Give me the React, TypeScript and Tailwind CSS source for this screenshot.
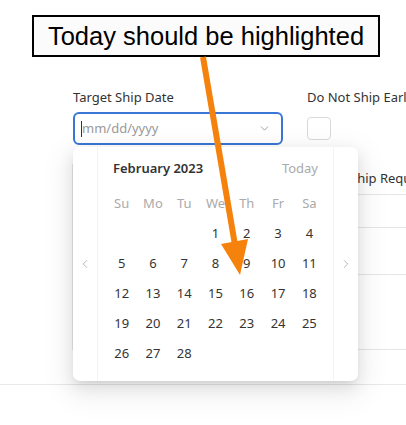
import React from "react";
import { ChevronDown, ChevronLeft, ChevronRight } from "lucide-react";

const weekdays = ["Su", "Mo", "Tu", "We", "Th", "Fr", "Sa"];
const weeks: (number | null)[][] = [
  [null, null, null, 1, 2, 3, 4],
  [5, 6, 7, 8, 9, 10, 11],
  [12, 13, 14, 15, 16, 17, 18],
  [19, 20, 21, 22, 23, 24, 25],
  [26, 27, 28, null, null, null, null],
];

export default function App() {
  return (
    <div
      className="relative w-[406px] h-[425px] bg-white overflow-hidden text-[#333]"
      style={{ fontFamily: '"Noto Sans", "Open Sans", sans-serif' }}
    >
      {/* Form */}
      <div className="flex pl-[73px] pt-[87px] gap-[24px]">
        <div className="flex flex-col w-[210px] shrink-0">
          <div className="h-[20px] text-[13px] leading-[20px] text-[#333]">Target Ship Date</div>
          <div className="mt-[5px] h-[33px] rounded-[6px] border-2 border-[#3a76d6] flex items-center justify-between pl-[6px] pr-[10px]">
            <div className="flex items-center">
              <span className="w-px h-[16px] bg-[#333]" />
              <span className="text-[13px] text-[#9a9a9a]">mm/dd/yyyy</span>
            </div>
            <ChevronDown size={13} strokeWidth={1.5} className="text-[#8c8c8c]" />
          </div>
        </div>
        <div className="flex flex-col shrink-0">
          <div className="h-[20px] text-[13px] leading-[20px] text-[#333] whitespace-nowrap">Do Not Ship Early</div>
          <div className="mt-[10px] w-[24px] h-[23px] rounded-[4px] border border-[#d9d9d9] bg-white" />
        </div>
      </div>

      {/* Background table */}
      <div className="ml-[72px] mt-[19px] border-l border-[#e8e8e8]">
        <div className="h-[31px] flex items-center border-b border-[#e5e5e5]">
          <span className="ml-[277px] text-[13px] whitespace-nowrap text-[#333]">Ship Requ</span>
        </div>
        <div className="h-[33px] border-b border-[#e5e5e5]" />
        <div className="h-[47px] border-b border-[#e5e5e5]" />
        <div className="h-[75px] border-b border-[#e5e5e5]" />
      </div>
      <div className="mt-[34px] border-t border-[#e8e8e8]" />

      {/* Date picker popup */}
      <div className="absolute left-[73px] top-[147px] w-[285px] h-[234px] bg-white rounded-[7px] shadow-[0_6px_16px_rgba(0,0,0,0.10),0_3px_6px_-4px_rgba(0,0,0,0.14),0_9px_28px_8px_rgba(0,0,0,0.06)] flex">
        <div className="w-[25px] border-r border-[#f3f3f3] flex items-center justify-center">
          <ChevronLeft size={14} strokeWidth={1.2} className="text-[#999]" />
        </div>
        <div className="flex-1 px-[8px] pt-[7px]">
          <div className="h-[30px] flex items-center justify-between px-[7px]">
            <span className="text-[13px] font-semibold text-[#333]">February 2023</span>
            <span className="text-[13px] text-[#aaa]">Today</span>
          </div>
          <div className="mt-[5px] grid grid-cols-7 h-[30px]">
            {weekdays.map((d) => (
              <div key={d} className="flex items-center justify-center text-[13px] text-[#aaa]">
                {d}
              </div>
            ))}
          </div>
          {weeks.map((w, i) => (
            <div key={i} className="grid grid-cols-7 h-[30px]">
              {w.map((d, j) => (
                <div key={j} className="flex items-center justify-center text-[13px] text-[#333]">
                  {d ?? ""}
                </div>
              ))}
            </div>
          ))}
        </div>
        <div className="w-[25px] border-l border-[#f3f3f3] flex items-center justify-center">
          <ChevronRight size={14} strokeWidth={1.2} className="text-[#999]" />
        </div>
      </div>

      {/* Callout annotation */}
      <div
        className="absolute left-[32px] top-[15px] w-[348px] h-[42px] border-2 border-black bg-[#fbfbfb] flex items-center justify-center text-[25.5px] text-black"
        style={{ fontFamily: '"Liberation Sans", Arial, sans-serif' }}
      >
        Today should be highlighted
      </div>

      {/* Arrow */}
      <svg className="absolute left-0 top-0 pointer-events-none" width="406" height="425" viewBox="0 0 406 425">
        <line x1="203" y1="57" x2="235" y2="245" stroke="#f5820d" strokeWidth="6" />
        <polygon points="221,244 248,239 240,275" fill="#f5820d" />
      </svg>
    </div>
  );
}
